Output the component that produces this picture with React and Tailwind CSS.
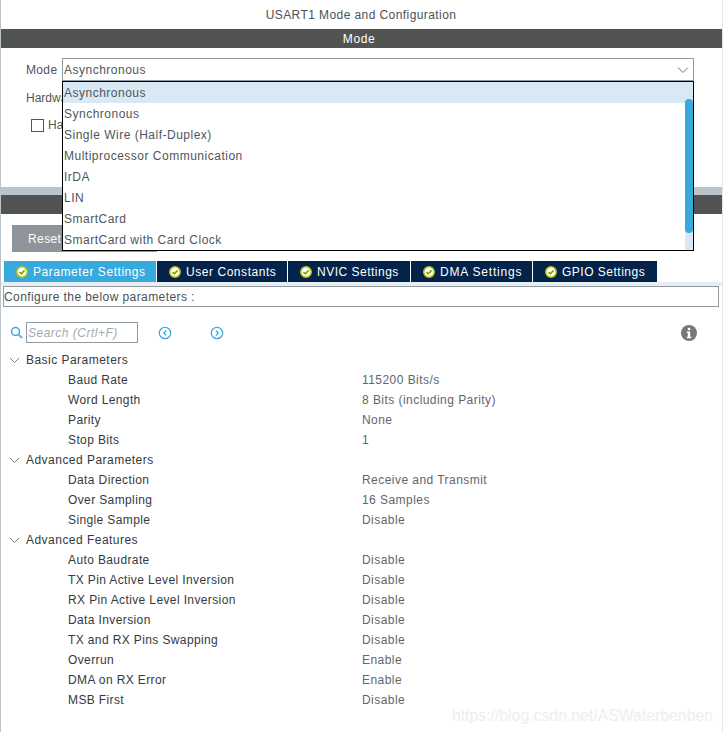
import React from "react";

const font = { fontFamily: '"Liberation Sans", Arial, sans-serif' };

function Check() {
  return (
    <svg width="12" height="12" viewBox="0 0 12 12" className="shrink-0">
      <circle cx="6" cy="6" r="5.2" fill="#ffffff" stroke="#b9c40c" strokeWidth="1.6" />
      <path d="M3.4 6l1.9 1.9 3.3-3.5" fill="none" stroke="#8a9a10" strokeWidth="1.6" />
    </svg>
  );
}

function Tab({ label, active, w, track }) {
  return (
    <div className={`${w} h-full flex items-center gap-[5px] pl-[12px] text-white ${active ? "bg-[#38a9dc]" : "bg-[#03234b]"}`}>
      <Check />
      <span className={track}>{label}</span>
    </div>
  );
}

function Chevron() {
  return (
    <svg width="11" height="7" viewBox="0 0 11 7" className="shrink-0">
      <path d="M1 1l4.5 4.5L10 1" fill="none" stroke="#7a7f83" strokeWidth="1" />
    </svg>
  );
}

function Header({ label }) {
  return (
    <div className="h-5 flex items-center pl-[8px] gap-[6px] text-[#333a40]">
      <Chevron />
      <span className="tracking-[0.47px]">{label}</span>
    </div>
  );
}

function Row({ label, value }) {
  return (
    <div className="h-5 flex items-center pl-[67px]">
      <span className="w-[294px] text-[#333a40] tracking-[0.38px]">{label}</span>
      <span className="text-[#5f666c] tracking-[0.45px]">{value}</span>
    </div>
  );
}

const options = [
  "Asynchronous",
  "Synchronous",
  "Single Wire (Half-Duplex)",
  "Multiprocessor Communication",
  "IrDA",
  "LIN",
  "SmartCard",
  "SmartCard with Card Clock",
];

export default function App() {
  return (
    <div style={font} className="relative w-[723px] h-[732px] overflow-hidden bg-white text-[12px] border-l border-[#b9c4cb] border-r-0">
      <div className="h-[29px] flex items-center justify-center text-[#4a5157] tracking-[0.42px] pr-[2px]">USART1 Mode and Configuration</div>
      <div className="h-[19px] mr-[1px] bg-[#525453] text-white flex items-center justify-center tracking-[0.6px] pr-[5px]">Mode</div>

      <div className="h-[139px] relative text-[#4f565c]">
        <div className="flex items-center pt-[10px] pl-[25px] h-[33px]">
          <span className="w-[36px] tracking-[0.35px]">Mode</span>
          <div className="w-[632px] h-[23px] border border-[#8f9aa1] flex items-center justify-between pl-[1px] pr-[3px]">
            <span className="tracking-[0.5px]">Asynchronous</span>
            <svg width="14" height="8" viewBox="0 0 14 8"><path d="M2 1.5l5 5 5-5" fill="none" stroke="#6f767b" strokeWidth="1" /></svg>
          </div>
        </div>
        <div className="pl-[25px] mt-[7px] h-[20px] flex items-center">Hardware Flow Control</div>
        <div className="pl-[30px] mt-[8px] flex items-center gap-[4px]">
          <span className="w-[13px] h-[13px] border border-[#4f565c]" />
          <span>Hardware</span>
        </div>
      </div>

      <div className="h-[8px] bg-[#b9c4cb]" />
      <div className="h-[19px] mr-[1px] bg-[#525453]" />

      <div className="pt-[11px] pl-[11px]">
        <div className="w-[145px] h-[27px] bg-[#8e9499] text-white flex items-center pl-[16px] tracking-[0.4px]">Reset Configuration</div>
      </div>

      <div className="mt-[9px] ml-[3px] h-[21px] flex gap-[1px]">
        <Tab label="Parameter Settings" active w="w-[152px]" track="tracking-[0.55px]" />
        <Tab label="User Constants" w="w-[130px]" track="tracking-[0.55px]" />
        <Tab label="NVIC Settings" w="w-[122px]" track="tracking-[0.5px]" />
        <Tab label="DMA Settings" w="w-[121px]" track="tracking-[0.8px]" />
        <Tab label="GPIO Settings" w="w-[124px]" track="tracking-[0.5px]" />
      </div>

      <div className="h-[4px] bg-[#e8edf1]" />
      <div className="ml-[2px] w-[716px] h-[21px] border border-[#8f9aa1] flex items-center text-[#4a5157] tracking-[0.42px]">Configure the below parameters :</div>

      <div className="h-[43px] flex items-center pt-[8px] pl-[9px] pr-[25px]">
        <svg width="13" height="13" viewBox="0 0 13 13" className="shrink-0">
          <circle cx="5.5" cy="5.5" r="4" fill="none" stroke="#38a9dc" strokeWidth="1.5" />
          <path d="M8.5 8.5L12 12" stroke="#38a9dc" strokeWidth="1.7" />
        </svg>
        <div className="ml-[3px] w-[112px] h-[21px] border border-[#8f9aa1] flex items-center pl-[1px] italic text-[#a4a9ad] tracking-[0.5px]">Search (Crtl+F)</div>
        <svg width="14" height="14" viewBox="0 0 14 14" className="ml-[20px] shrink-0">
          <circle cx="7" cy="7" r="5.7" fill="none" stroke="#38a9dc" strokeWidth="1.2" />
          <path d="M8.2 4.5L5.7 7l2.5 2.5" fill="none" stroke="#38a9dc" strokeWidth="1.2" />
        </svg>
        <svg width="14" height="14" viewBox="0 0 14 14" className="ml-[38px] shrink-0">
          <circle cx="7" cy="7" r="5.7" fill="none" stroke="#38a9dc" strokeWidth="1.2" />
          <path d="M5.8 4.5L8.3 7l-2.5 2.5" fill="none" stroke="#38a9dc" strokeWidth="1.2" />
        </svg>
        <svg width="16" height="16" viewBox="0 0 16 16" className="ml-auto shrink-0 mr-[1px]">
          <circle cx="8" cy="8" r="8" fill="#757779" />
          <rect x="6.8" y="2.8" width="2.4" height="2.4" fill="#fff" />
          <path d="M5.8 6.6h3.4v5.2h1v1.4H5.8v-1.4h1V8H5.8z" fill="#fff" />
        </svg>
      </div>

      <Header label="Basic Parameters" />
      <Row label="Baud Rate" value="115200 Bits/s" />
      <Row label="Word Length" value="8 Bits (including Parity)" />
      <Row label="Parity" value="None" />
      <Row label="Stop Bits" value="1" />
      <Header label="Advanced Parameters" />
      <Row label="Data Direction" value="Receive and Transmit" />
      <Row label="Over Sampling" value="16 Samples" />
      <Row label="Single Sample" value="Disable" />
      <Header label="Advanced Features" />
      <Row label="Auto Baudrate" value="Disable" />
      <Row label="TX Pin Active Level Inversion" value="Disable" />
      <Row label="RX Pin Active Level Inversion" value="Disable" />
      <Row label="Data Inversion" value="Disable" />
      <Row label="TX and RX Pins Swapping" value="Disable" />
      <Row label="Overrun" value="Enable" />
      <Row label="DMA on RX Error" value="Enable" />
      <Row label="MSB First" value="Disable" />

      {/* open dropdown, floats over the page */}
      <div className="absolute left-[61px] top-[81px] w-[632px] h-[170px] border border-black bg-white text-[#4f565c] tracking-[0.5px] flex">
        <div className="flex-1">
          {options.map((o, i) => (
            <div key={o} className={`h-[21px] flex items-center pl-[1px] ${i === 0 ? "bg-[#d9e8f5]" : ""}`}>{o}</div>
          ))}
        </div>
        <div className="w-[8px] bg-[#d9e8f5] pt-[17px] rounded-[1px]">
          <div className="h-[134px] bg-[#38a9dc] rounded-[4px]" />
        </div>
      </div>

      <div className="absolute right-[10px] top-[704px] text-[15.8px] text-[#eeeeee]">https://blog.csdn.net/ASWaterbenben</div>
      <div className="absolute right-0 top-0 w-[1px] h-full bg-[#dfe7ed]" />
    </div>
  );
}
